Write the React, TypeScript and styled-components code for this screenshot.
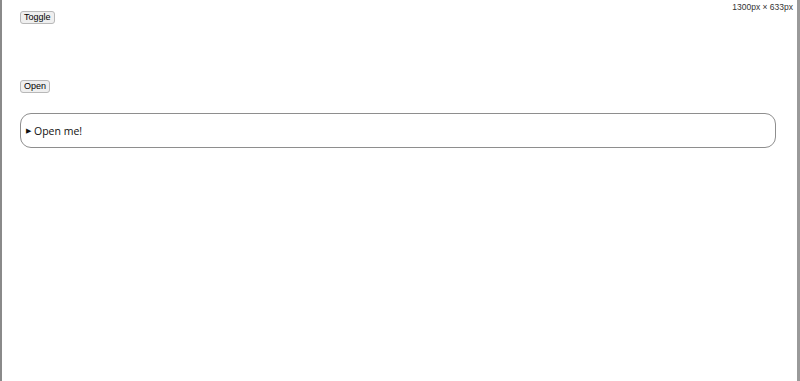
import React from "react";
import styled, { createGlobalStyle } from "styled-components";

const GlobalStyle = createGlobalStyle`
  html, body {
    margin: 0;
    padding: 0;
    background: #ffffff;
  }
`;

const Frame = styled.div`
  position: relative;
  width: 800px;
  height: 381px;
  box-sizing: border-box;
  border-left: 2px solid #8a8a8a;
  border-right: 3px solid #9a9a9a;
  padding: 11px 21px 0 18px;
  display: flex;
  flex-direction: column;
  align-items: flex-start;
  font-family: "Liberation Sans", Arial, sans-serif;
`;

const SizeLabel = styled.div`
  position: absolute;
  top: 2px;
  right: 4px;
  font-size: 8.5px;
  color: #333;
  font-family: "Liberation Sans", Arial, sans-serif;
`;

const SmallButton = styled.button<{ $gap?: number }>`
  margin-top: ${(p) => p.$gap ?? 0}px;
  box-sizing: border-box;
  height: 13px;
  font-family: "Liberation Sans", Arial, sans-serif;
  font-size: 9px;
  line-height: 9px;
  padding: 0 3px;
  color: #000;
  background: #efefef;
  border: 1px solid #b8b8b8;
  border-radius: 3px;
`;

const Details = styled.details`
  margin-top: 20px;
  width: 100%;
  box-sizing: border-box;
  height: 35px;
  border: 1px solid #8e8e8e;
  border-radius: 11px;
  padding: 0 5px;
  font-family: "Open Sans", "Noto Sans", sans-serif;
`;

const Summary = styled.summary`
  display: flex;
  align-items: center;
  height: 33px;
  gap: 3px;
  font-size: 10.5px;
  color: #111;
  cursor: pointer;
  list-style: none;
  &::-webkit-details-marker {
    display: none;
  }
`;

const Marker = styled.span`
  font-size: 6.5px;
  color: #111;
`;

export default function App() {
  return (
    <>
      <GlobalStyle />
      <Frame>
        <SizeLabel>1300px × 633px</SizeLabel>
        <SmallButton>Toggle</SmallButton>
        <SmallButton $gap={56}>Open</SmallButton>
        <Details>
          <Summary>
            <Marker>▶</Marker>
            Open me!
          </Summary>
        </Details>
      </Frame>
    </>
  );
}
